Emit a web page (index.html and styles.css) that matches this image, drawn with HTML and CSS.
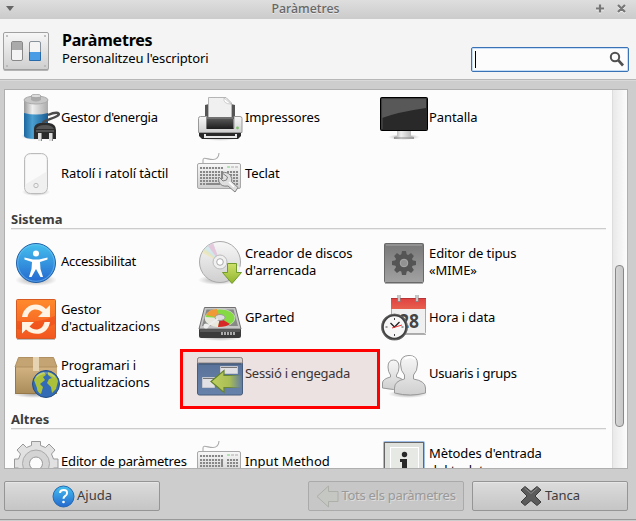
FILE: index.html
```html
<!DOCTYPE html>
<html lang="ca">
<head>
<meta charset="utf-8">
<title>Paràmetres</title>
<link rel="stylesheet" href="styles.css">
</head>
<body>
<svg class="defs" width="0" height="0" aria-hidden="true">
  <defs>
    <linearGradient id="silver" x1="0" y1="0" x2="0" y2="1"><stop offset="0" stop-color="#f7f7f7"/><stop offset="1" stop-color="#cfcfcf"/></linearGradient>
    <linearGradient id="steel" x1="0" y1="0" x2="1" y2="0"><stop offset="0" stop-color="#999"/><stop offset=".35" stop-color="#eee"/><stop offset="1" stop-color="#aaa"/></linearGradient>
    <linearGradient id="cell" x1="0" y1="0" x2="1" y2="0"><stop offset="0" stop-color="#1c669f"/><stop offset=".35" stop-color="#4a9fd0"/><stop offset="1" stop-color="#175a91"/></linearGradient>
    <linearGradient id="dark" x1="0" y1="0" x2="0" y2="1"><stop offset="0" stop-color="#606060"/><stop offset="1" stop-color="#1c1c1c"/></linearGradient>
    <linearGradient id="blue" x1="0" y1="0" x2="0" y2="1"><stop offset="0" stop-color="#45c0ee"/><stop offset="1" stop-color="#2468cf"/></linearGradient>
    <linearGradient id="orange" x1="0" y1="0" x2="0" y2="1"><stop offset="0" stop-color="#ff8a2c"/><stop offset="1" stop-color="#f2561f"/></linearGradient>
    <linearGradient id="green" x1="0" y1="0" x2="0" y2="1"><stop offset="0" stop-color="#cfe06c"/><stop offset="1" stop-color="#8fb52c"/></linearGradient>
    <linearGradient id="mime" x1="0" y1="0" x2="0" y2="1"><stop offset="0" stop-color="#777"/><stop offset="1" stop-color="#a2a2a2"/></linearGradient>
    <linearGradient id="red" x1="0" y1="0" x2="0" y2="1"><stop offset="0" stop-color="#e04040"/><stop offset="1" stop-color="#e7604e"/></linearGradient>
    <linearGradient id="box" x1="0" y1="0" x2="0" y2="1"><stop offset="0" stop-color="#d4b483"/><stop offset="1" stop-color="#a98a59"/></linearGradient>
    <linearGradient id="desk" x1="0" y1="0" x2="0" y2="1"><stop offset="0" stop-color="#566f96"/><stop offset="1" stop-color="#6883ab"/></linearGradient>
    <linearGradient id="fade" x1="0" y1="0" x2="1" y2="0"><stop offset="0" stop-color="#c0d060"/><stop offset=".6" stop-color="#a8bd55"/><stop offset="1" stop-color="#a8bd55" stop-opacity="0"/></linearGradient>
    <linearGradient id="fadeline" x1="0" y1="0" x2="1" y2="0"><stop offset="0" stop-color="#5c7d20"/><stop offset=".6" stop-color="#6c8736"/><stop offset="1" stop-color="#6c8736" stop-opacity="0"/></linearGradient>
    <radialGradient id="shade"><stop offset="0" stop-color="#000" stop-opacity=".35"/><stop offset="1" stop-color="#000" stop-opacity="0"/></radialGradient>
    <symbol id="keyboard" viewBox="0 0 48 48">
      <path d="M7 13V10C7 5 17 13 21 8Q23 6 23 3" fill="none" stroke="#aaa" stroke-width="1.1"/>
      <rect x="1.5" y="13.5" width="43" height="25" rx="1.5" fill="url(#silver)" stroke="#a8a8a8"/>
      <g fill="none" stroke="#888" stroke-width="2" stroke-dasharray="2.1 .9"><path d="M4 18h23M4 22h24M4 25h23M4 28h24M4 31h24M4 34h24M31 22h11M31 25h11M31 28h11M31 31h11M31 34h11"/></g>
      <path d="M11 34h12M26 22v5" stroke="#888" stroke-width="2"/>
      <path d="M31 17h3" stroke="#72d172"/><path d="M35 17h3M39 17h3" stroke="#aaa"/>
    </symbol>
  </defs>
</svg>
<div class="window">
  <header class="titlebar">
    <svg class="menu" width="10" height="7" viewBox="0 0 10 7"><path d="M1 1h8L5 6z" fill="#666"/></svg>
    <span class="title">Paràmetres</span>
    <svg class="winbtns" width="32" height="12" viewBox="0 0 32 12"><g stroke="#fff" stroke-opacity=".7" stroke-width="2.2"><path d="M1 7.5h8M5 3.500v8M23 4l7 7M30 4l-7 7"/></g><g stroke="#777" stroke-width="2.2"><path d="M1 6.500h8M5 2.500v8M23 3l7 7M30 3l-7 7"/></g></svg>
  </header>
  <section class="banner">
    <svg class="logo" width="48" height="42" viewBox="0 0 48 42">
      <rect x=".5" y="2" width="45" height="37" rx="1.500" fill="#888" opacity=".6"/>
      <rect x=".5" y=".5" width="45" height="37" rx="1.500" fill="url(#silver)" stroke="#a0a0a0"/>
      <g fill="#b5b5b5"><circle cx="4" cy="4" r="1.100"/><circle cx="42" cy="4" r="1.100"/><circle cx="4" cy="34" r="1.100"/><circle cx="42" cy="34" r="1.100"/></g>
      <rect x="8.500" y="9.500" width="11" height="19" rx="1.500" fill="#f4f4f4" stroke="#888"/><path d="M9 10h10v8H9z" fill="#aaa"/>
      <rect x="26.500" y="9.500" width="11" height="19" rx="1.500" fill="#f4f4f4" stroke="#88929c"/><path d="M27 20h10v8H27z" fill="#4a9ce4"/><path d="M26.500 20v8.500h11V20" fill="none" stroke="#2869aa"/>
    </svg>
    <div class="heading"><h1>Paràmetres</h1><p>Personalitzeu l'escriptori</p></div>
    <div class="search"><i class="caret"></i>
      <svg width="16" height="17" viewBox="0 0 16 17"><circle cx="6" cy="6" r="4.200" fill="none" stroke="#505050" stroke-width="2"/><path d="M9.200 9.200L14 14.500" stroke="#505050" stroke-width="2.700"/></svg>
    </div>
  </section>
  <main class="panel">
    <div class="content">
      <div class="grid first">
        <div class="item"><svg class="icon" viewBox="0 0 48 48">
          <ellipse cx="23" cy="42" rx="14" ry="4" fill="url(#shade)"/>
          <path d="M12 6v36q0 3 12 3t12-3V6z" fill="url(#cell)"/><path d="M12 6v13q12 3 24 0V6z" fill="url(#steel)"/>
          <ellipse cx="24" cy="6" rx="12" ry="4" fill="#c7c7c7" stroke="#aaa"/><path d="M19 2v4q5 3 10 0V2z" fill="#aaa"/><ellipse cx="24" cy="2" rx="5" ry="1.700" fill="#ddd" stroke="#999" stroke-width=".7"/>
          <path d="M33 30C24 27 52 23 46 19Q43 18 36 21" fill="none" stroke="#4b4b4b" stroke-width="2.400"/>
          <path d="M22 45V35q0-5 6-6h9q7 1 7 7v9z" fill="#2c2c2c"/><path d="M24 37h18" stroke="#777"/><path d="M24 35q2-4 9-4t9 4z" fill="#555"/>
          <path d="M27.500 39v8M38.500 39v8" stroke="#ddd" stroke-width="3"/><path d="M29.500 39v8M40.500 39v8" stroke="#888"/>
        </svg><span class="tight">Gestor d'energia</span></div>
        <div class="item"><svg class="icon" viewBox="0 0 48 48">
          <ellipse cx="24" cy="43" rx="20" ry="4" fill="url(#shade)"/>
          <path d="M9 11h30v14H9z" fill="#333"/><path d="M9 11l4-1v13H9zM39 11l-4-1v13h4z" fill="#555"/>
          <path d="M12.500 3.500H30L35.500 9v15h-23z" fill="#f0f0f0" stroke="#b5b5b5"/><path d="M28 4q-1 6 7 6z" fill="#fff" stroke="#bbb" stroke-width=".7"/>
          <path d="M3 38h42v4l-3 3H6l-3-3z" fill="#292929"/><path d="M2.500 24.500q0-2 2-2H11v12h27v-12h6q2 0 2 2v14h-43.500z" fill="url(#silver)" stroke="#999"/><rect x="10.500" y="23" width="27" height="12" fill="url(#dark)"/><path d="M11 24h26" stroke="#888"/>
          <path d="M9 40v3h31v-3" fill="none" stroke="#e8e8e8" stroke-width="2"/><circle cx="41.500" cy="34" r="1.400" fill="#80c070"/>
        </svg><span>Impressores</span></div>
        <div class="item"><svg class="icon" viewBox="0 0 48 48">
          <ellipse cx="24" cy="43" rx="16" ry="3" fill="url(#shade)"/><path d="M17 37h14v5l3 1v2H14v-2l3-1z" fill="url(#steel)"/><path d="M14 44h20" stroke="#888"/>
          <rect x=".5" y="3.500" width="47" height="33" rx="1" fill="#292929" stroke="#000"/><path d="M2 5h44v9Q18 18 2 24z" fill="#fff" opacity=".22"/><path d="M2 35V5h44" fill="none" stroke="#555"/>
        </svg><span>Pantalla</span></div>
        <div class="item"><svg class="icon" viewBox="0 0 48 48">
          <ellipse cx="24" cy="42" rx="14" ry="4" fill="url(#shade)"/><rect x="12.500" y="3.500" width="23" height="40" rx="6" fill="#f0f0f0" stroke="#bbb"/><path d="M14 8q0-3 4-3h12q4 0 4 3v14L14 34z" fill="#fff" opacity=".65"/><circle cx="24" cy="35.500" r="2.200" fill="none" stroke="#bbb"/>
        </svg><span>Ratolí i ratolí tàctil</span></div>
        <div class="item"><svg class="icon" viewBox="0 0 48 48"><use href="#keyboard" width="48" height="48"/>
          <path d="M25.500 22.500q6-1 9 3 2 3 1 6l6.500 6-3 4.500-7-6q-7 1-9-4-1-4 0-5l4 4 3.500-1 1-3z" fill="#dedede" stroke="#808080"/><path d="M33 32l5 5" stroke="#fff" stroke-width="1.500"/>
        </svg><span>Teclat</span></div>
      </div>
      <h2>Sistema</h2>
      <div class="grid">
        <div class="item"><svg class="icon" viewBox="0 0 48 48">
          <ellipse cx="24" cy="41" rx="21" ry="6" fill="url(#shade)"/><circle cx="24" cy="24" r="19.500" fill="url(#blue)" stroke="#2260a8"/><circle cx="24" cy="24" r="18.300" fill="none" stroke="#79c8f2" opacity=".6"/>
          <circle cx="24" cy="14.500" r="3" fill="#fff"/><path d="M12.500 18.500L21 20.500h6l8.500-2v2L28 23l.5 7 2.500 8h-2.500L24 30l-4.500 8H17l2.500-8L20 23l-7.500-2.500z" fill="#fff"/>
        </svg><span class="tight">Accessibilitat</span></div>
        <div class="item"><svg class="icon" viewBox="0 0 48 48">
          <ellipse cx="22" cy="41" rx="20" ry="5" fill="url(#shade)"/><circle cx="24" cy="23" r="20.500" fill="url(#silver)" stroke="#aaa"/>
          <path d="M24 23L7 12Q11 6 17 4z" fill="#bfe5e7" opacity=".6"/><path d="M24 23L12 7l5-3z" fill="#efb2d2" opacity=".6"/><path d="M24 23L6 14l3-4z" fill="#f0e5aa" opacity=".6"/><path d="M24 23L42 34q2-3 3-6z" fill="#fff" opacity=".7"/>
          <circle cx="24" cy="23" r="7" fill="#f0f0f0" stroke="#bbb"/><circle cx="24" cy="23" r="3.300" fill="#fff" stroke="#aaa"/>
          <path d="M31.500 24.500h9v9h5L36 44.500 26.500 33.500h5z" fill="url(#green)" stroke="#719b2b"/>
        </svg><span class="two">Creador de discos<br>d'arrencada</span></div>
        <div class="item"><svg class="icon" viewBox="0 0 48 48">
          <path d="M5 44.500h38" stroke="#000" opacity=".3"/><rect x="4.500" y="4.500" width="39" height="39" rx="1" fill="url(#mime)" stroke="#696969"/><path d="M6 6h36" stroke="#aaa"/>
          <g transform="translate(24 24)"><g fill="#555"><circle r="9"/><path d="M-2-12h4l1 5h-6zM-2 12h4l1-5h-6z"/><path transform="rotate(45)" d="M-2-12h4l1 5h-6zM-2 12h4l1-5h-6z"/><path transform="rotate(90)" d="M-2-12h4l1 5h-6zM-2 12h4l1-5h-6z"/><path transform="rotate(135)" d="M-2-12h4l1 5h-6zM-2 12h4l1-5h-6z"/></g><circle r="3.800" fill="#929292" stroke="#aaa"/></g>
        </svg><span class="two">Editor de tipus<br>«MIME»</span></div>
        <div class="item"><svg class="icon" viewBox="0 0 48 48">
          <path d="M5 44.500h38" stroke="#000" opacity=".25"/><rect x="4.500" y="4.500" width="39" height="39" rx="1" fill="url(#orange)" stroke="#d65a22"/><path d="M5 26q20 3 38-5v8q-20 10-38 5z" fill="#e83312" opacity=".35"/>
          <g fill="#fff3e3"><path d="M10 22C12 9 26 6 34 14l4-4v12H26l4.500-4.500C25 12 17 14 15.500 22z"/><path d="M38 27C36 40 22 42 14 34.500l-4 4V27h12l-4.500 4.500c5 5 13 4 15-4.500z"/></g>
        </svg><span class="two">Gestor<br>d'actualitzacions</span></div>
        <div class="item"><svg class="icon" viewBox="0 0 48 48">
          <ellipse cx="24" cy="42" rx="22" ry="4" fill="url(#shade)"/><path d="M3 34h42v7q0 2-2 2H5q-2 0-2-2z" fill="#3b3b3b"/><path d="M8.500 12.500h31L45 34H3z" fill="#c5c5c5" stroke="#707070"/><path d="M10.500 14.500h27L42 31H6z" fill="#868986"/>
          <ellipse cx="24" cy="23" rx="15" ry="9" fill="#85d943" stroke="#ddd" stroke-width=".7"/><path d="M24 23L10 20Q13 14 21 14z" fill="#ef9a37"/><path d="M24 23L9 22Q8 30 22 32z" fill="#e8e8df"/><path d="M24 23l-2 9q9 0 12-3z" fill="#d82929"/><ellipse cx="24" cy="22.500" rx="5" ry="3" fill="#ddd" stroke="#999"/><path d="M10 32l12-8" stroke="#eee" stroke-width="2"/><circle cx="10" cy="31" r="2.500" fill="#eee"/>
          <path d="M4 36h40" stroke="#777"/><path d="M25 38.500h15" stroke="#aaa" stroke-width="3" stroke-dasharray="2 1"/>
        </svg><span>GParted</span></div>
        <div class="item"><svg class="icon" viewBox="0 0 48 48">
          <path d="M11 39.500h35" stroke="#000" opacity=".3"/><rect x="11.500" y="4.500" width="34" height="34" rx="1" fill="#f0f0f0" stroke="#aaa"/><path d="M11 3h35v11H11z" fill="url(#red)"/><path d="M11 3.500h35" stroke="#b83434"/><path d="M19 0v7M37 0v7" stroke="#888" stroke-width="3"/><path d="M19 0v6M37 0v6" stroke="#ddd" stroke-width="1.500"/>
          <text x="19" y="33" class="date" textLength="20" lengthAdjust="spacingAndGlyphs">28</text>
          <circle cx="14.500" cy="32" r="12" fill="#f7f7f7" stroke="#414141" stroke-width="2.600"/><circle cx="14.500" cy="32" r="12.900" fill="none" stroke="#888" stroke-width=".5"/>
          <path d="M14.500 23v2M14.500 39v2M5.500 32h2M21.500 32h2" stroke="#444"/><path d="M10.500 28l4 4 5-5" fill="none" stroke="#222" stroke-width="1.300"/><path d="M12 33l10-3" stroke="#e33"/>
        </svg><span>Hora i data</span></div>
        <div class="item"><svg class="icon" viewBox="0 0 48 48">
          <ellipse cx="22" cy="43" rx="21" ry="4" fill="url(#shade)"/><path d="M3 15h42v28H3z" fill="url(#box)"/><path d="M6.500 6.500h35L45 16H3z" fill="#c5a473" stroke="#b09060"/><path d="M21 6h6v14h-6z" fill="#e5d3b2"/><path d="M3.500 16v26.500H44" fill="none" stroke="#967849"/>
          <circle cx="34" cy="33" r="13.500" fill="#336cb4" stroke="#254d83"/><path d="M22 29q3-7 10-8l2 3-3 2 2 3-5 4 3 3-2 7q-4-2-4-6zM36 21q8 2 10 9l-2 8-4 4-1-6-4-4 2-4 3-1-4-3z" fill="#acc13a"/><path d="M24 26q9-8 19 0" fill="none" stroke="#fff" opacity=".25" stroke-width="2"/>
        </svg><span class="two">Programari i<br>actualitzacions</span></div>
        <div class="item selected"><svg class="icon" viewBox="0 0 48 48">
          <rect x="1.500" y="7" width="45" height="37" rx="2" fill="url(#desk)" stroke="#485c7b"/><path d="M1.500 12V8.500q0-2 2-2h41q2 0 2 2V12z" fill="#d8cfcd" stroke="#8d8583"/><path d="M3 13h42" stroke="#3f506c"/>
          <path d="M24.500 15.500h17v7h-17zM6.500 26.500h12v10h-12z" fill="#e1e0e4" stroke="#c5c8d0"/><path d="M25 16.500h16M7 27.500h11" stroke="#777"/>
          <path d="M46 24.500H28v-5L15 30.500l13 11v-5h18z" fill="url(#fade)" stroke="url(#fadeline)" stroke-width="1.200"/>
        </svg><span class="tight">Sessió i engegada</span></div>
        <div class="item"><svg class="icon" viewBox="0 0 48 48">
          <ellipse cx="28" cy="43" rx="20" ry="4" fill="url(#shade)"/><g fill="url(#silver)" stroke="#999"><path d="M2.500 37v-5q0-4 8-6v-2q-2.500-3-2.500-8 0-7 5.500-7t5.500 7q0 5-2.500 8v2q8 2 8 6v5q-11 3-22 0z"/><path d="M14.500 42v-5q0-7 10-9v-4q-4-4-4-11 0-8.500 8.500-8.500t8.500 8.500q0 7-4 11v4q12 2 12 9v5q-15 4-31 0z"/></g><path d="M25 8q5-4 10 0" fill="none" stroke="#fff" stroke-width="2"/>
        </svg><span class="tight">Usuaris i grups</span></div>
      </div>
      <h2 class="others">Altres</h2>
      <div class="grid">
        <div class="item"><svg class="icon" viewBox="0 0 48 48">
          <path d="M19.500 6.500V2.500h9v4l5 2 3.500-3.500 6 6L39.500 15l2 5h4.500v9h-4.500l-2 5 3.500 4-6 6-4-3.500-4.500 2v4h-9v-4l-5-2-3.500 3.500-6-6L8.500 34l-2-5H2.500v-9h4l2-5L5 11l6-6 3.500 3.500z" fill="#e1e1e1" stroke="#999"/><circle cx="24" cy="24.500" r="13.500" fill="#d4d4d4" stroke="#aaa"/><circle cx="24" cy="24.500" r="6.500" fill="#fcfcfc" stroke="#999"/>
        </svg><span class="snug">Editor de paràmetres</span></div>
        <div class="item"><svg class="icon" viewBox="0 0 48 48"><use href="#keyboard" y="-1" width="48" height="48"/></svg><span class="wide">Input Method</span></div>
        <div class="item"><svg class="icon" viewBox="0 0 48 48">
          <rect x="3" y="2" width="42" height="44" rx="2" fill="#9dbde6"/><rect x="4.500" y="3.500" width="39" height="42" fill="#dfe1dd" stroke="#666"/><rect x="10.500" y="8.500" width="28" height="35" fill="#e7e9e5" stroke="#fff"/><circle cx="24.500" cy="15.500" r="2.700" fill="#292929"/><path d="M20 20h7v14h-5V23h-2z" fill="#292929"/>
        </svg><span class="two">Mètodes d'entrada<br>del teclat</span></div>
      </div>
    </div>
    <div class="scrollbar"><div class="thumb"></div></div>
  </main>
  <footer class="actions">
    <button class="btn help"><svg width="23" height="23" viewBox="0 0 23 23"><circle cx="11.500" cy="11.500" r="10.500" fill="url(#blue)" stroke="#2469b3"/><path d="M8 8q0-3 3.700-3T15 8.200q0 1.800-2 3-1.500 1-1.500 2.500" fill="none" stroke="#fff" stroke-width="2"/><circle cx="11.500" cy="17" r="1.300" fill="#fff"/></svg><span>Ajuda</span></button>
    <button class="btn all" disabled><svg width="23" height="23" viewBox="0 0 23 23"><path d="M1 11.500L12.500 1v5.500H22v10h-9.500V22z" fill="#c5c7c2" stroke="#adafa9"/></svg><span class="tight">Tots els paràmetres</span></button>
    <button class="btn close"><svg width="22" height="22" viewBox="0 0 22 22"><path d="M5 1.500l6 5 6-5L21 5l-6 6 6 6-4 3.500-6-5-6 5L1 17l6-6-6-6z" fill="#5b5b5b" stroke="#3b3b3b"/><path d="M4.500 3l6.500 5.500L17.500 3" fill="none" stroke="#888"/></svg><span>Tanca</span></button>
  </footer>
</div>
</body>
</html>
```

FILE: styles.css
```css
*, *::before { box-sizing: border-box; }
body { margin: 0; width: 636px; height: 521px; overflow: hidden; font: 13px/17px "Noto Sans", "Open Sans", sans-serif; color: #000; background: #cdcdcd; }
.defs { position: absolute; }
.window { height: 520px; display: flex; flex-direction: column; border-bottom: 1px solid #999; }
.titlebar { height: 19px; flex: none; display: grid; grid-template-columns: 40px 1fr 40px; align-items: center; background: linear-gradient(#dedede, #cbcbcb); }
.menu { margin-left: 5px; margin-top: -2px; }
.title { text-align: center; color: #666; font-size: 12.3px; font-weight: 500; line-height: 17px; margin-top: -2px; padding-right: 25px; text-shadow: 0 1px #e9e9e9; }
.winbtns { margin-left: -1px; margin-top: -3px; }
.banner { height: 60px; flex: none; display: flex; background: #f4f4f4; padding: 13px 8px 0 3px; box-shadow: 0 1px #b7b7b7, 0 2px #d9d9d9; }
.logo { flex: none; }
.heading { margin-left: 11px; flex: 1; }
h1 { margin: -1px 0 1px; font-size: 16px; line-height: 18px; font-weight: 700; letter-spacing: -.2px; }
.heading p { margin: 0; line-height: 17px; white-space: nowrap; letter-spacing: -.12px; }
.search { width: 158px; height: 25px; margin-top: 15px; margin-right: -1px; border: 1px solid #3973b5; border-radius: 2px; box-shadow: inset 0 0 0 1px #c6ddf5; background: #fcfcfc; display: flex; justify-content: space-between; padding: 3px 3px; }
.caret { width: 1px; height: 17px; background: #000; }
.panel { margin: 10px 8px 0 4px; width: 624px; height: 380px; flex: none; border: 1px solid #afafaf; display: flex; background: #fcfcfc; overflow: hidden; }
.content { width: 607px; flex: none; padding-left: 7px; }
.grid { display: grid; grid-template-columns: repeat(3, 184px); grid-auto-rows: 56px; }
.item { display: flex; align-items: center; min-width: 0; }
.icon { width: 48px; height: 48px; flex: none; position: relative; z-index: 1; }
.item span { margin: -4px 0 0 1px; white-space: nowrap; position: relative; z-index: 1; letter-spacing: -.1px; }
.first .item span { margin-top: -2px; }
.item .two { margin-top: -2px; }
.item .tight, .all .tight { letter-spacing: -.27px; }
.item .snug { letter-spacing: -.17px; }
.item .wide { letter-spacing: .05px; }
h2 { height: 26px; margin: 1px 6px 6px -1px; padding-top: 8px; border-bottom: 1px solid #ccc; box-shadow: 0 1px #eee; font-size: 13px; line-height: 17px; color: #3c3c3c; }
.others { margin-top: 0; }
.selected { position: relative; color: #3c3434; }
.selected::before { content: ""; position: absolute; left: -16px; top: 2px; width: 200px; height: 60px; border: 3px solid #f00; background: #ebe2e1; z-index: 1; }
.scrollbar { width: 15px; border-left: 1px solid #ddd; background: linear-gradient(90deg, #e9e9e9, #fcfcfc); padding-top: 175px; }
.thumb { width: 9px; height: 162px; margin-left: 2px; border: 1px solid #888; border-radius: 4px; background: linear-gradient(90deg, #d5d5d5, #c8c8c8); }
.date { font: bold 20px "Open Sans", sans-serif; fill: #444; }
.actions { display: flex; padding: 12px 8px 0 4px; }
.btn { width: 156px; height: 30px; padding: 0; border: 1px solid #959595; border-radius: 2px; background: linear-gradient(#dcdcdc, #c5c5c5); box-shadow: inset 0 1px #e6e6e6; display: flex; align-items: center; justify-content: center; gap: 2px; font: inherit; color: #3c3c3c; white-space: nowrap; }
.btn span { margin-top: -1px; }
.all { margin-left: 148px; color: #999; background: #c7c7c7; border-color: #aaa; box-shadow: none; text-shadow: 1px 1px #ddd; }
.close { margin-left: 8px; gap: 3px; }
```
